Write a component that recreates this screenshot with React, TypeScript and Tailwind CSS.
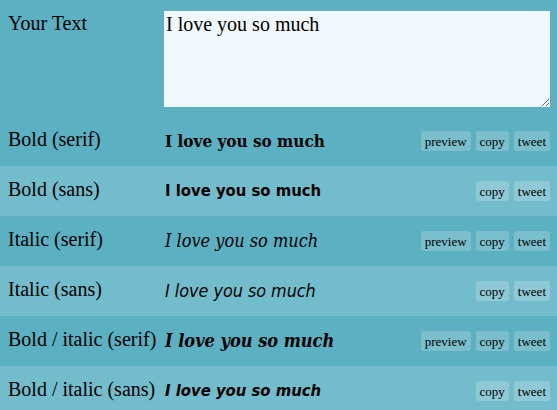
import React from "react";

const serif = "'Liberation Serif', 'Times New Roman', serif";
const cserif = "'DejaVu Serif Condensed', 'DejaVu Serif', serif";
const csans = "'DejaVu Sans Condensed', 'DejaVu Sans', sans-serif";

const rows = [
  { label: "Bold (serif)", cls: "font-bold text-[17px]", font: cserif, preview: true },
  { label: "Bold (sans)", cls: "font-bold text-[16.5px]", font: csans, preview: false },
  { label: "Italic (serif)", cls: "italic text-[18px]", font: cserif, preview: true },
  { label: "Italic (sans)", cls: "italic text-[17.8px]", font: csans, preview: false },
  { label: "Bold / italic (serif)", cls: "font-bold italic text-[18px]", font: cserif, preview: true },
  { label: "Bold / italic (sans)", cls: "font-bold italic text-[16.5px]", font: csans, preview: false },
];

function Btn({ children }: { children: React.ReactNode }) {
  return (
    <span className="h-[20px] px-[4px] flex items-center rounded-[3px] bg-white/20 text-[13px] leading-none text-black">
      {children}
    </span>
  );
}

export default function App() {
  return (
    <div className="w-[557px] h-[410px] overflow-hidden bg-[#5bb0c1] text-black" style={{ fontFamily: serif }}>
      <div className="flex h-[116px]">
        <div className="w-[164px] pl-[8px] pt-[11px] text-[20px] leading-[24px]">Your Text</div>
        <textarea
          defaultValue="I love you so much"
          className="mt-[11px] w-[386px] h-[96px] bg-[#f0f8fb] px-[2px] pt-[2px] text-[20px] leading-[23px] outline-none border-0"
          style={{ fontFamily: serif }}
        />
      </div>
      {rows.map((r, i) => (
        <div
          key={r.label}
          className={`flex items-center h-[50px] ${i % 2 === 0 ? "bg-[#5bb0c1]" : "bg-[#73bccb]"}`}
        >
          <div className="w-[164px] pl-[8px] pb-[4px] text-[20px] leading-[24px] whitespace-nowrap">{r.label}</div>
          <div
            className={`flex-1 pl-[1px] leading-[24px] whitespace-nowrap font-stretch-condensed ${r.cls}`}
            style={{ fontFamily: r.font }}
          >
            I love you so much
          </div>
          <div className="flex gap-[5px] pr-[7px]">
            {r.preview && <Btn>preview</Btn>}
            <Btn>copy</Btn>
            <Btn>tweet</Btn>
          </div>
        </div>
      ))}
    </div>
  );
}
